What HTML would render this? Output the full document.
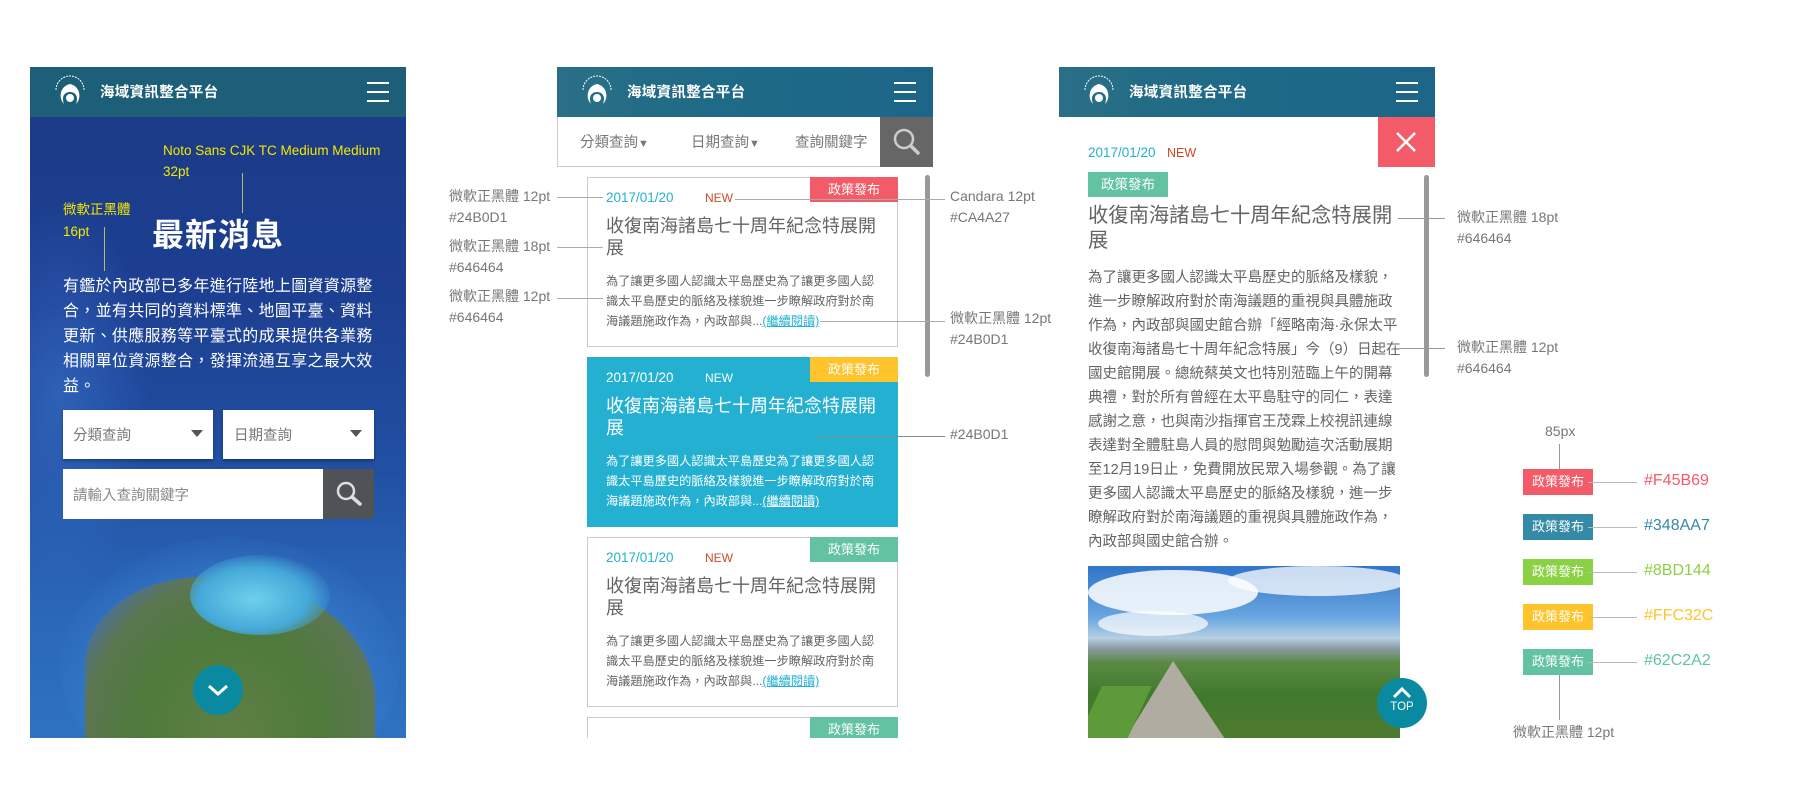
<!DOCTYPE html>
<html><head><meta charset="utf-8">
<style>
*{margin:0;padding:0;box-sizing:border-box}
html,body{width:1800px;height:800px;overflow:hidden}
body{background:#fff;position:relative;font-family:"Liberation Sans","Noto Sans CJK TC",sans-serif;}
.a{position:absolute;white-space:nowrap}
.phone{position:absolute;top:67px;width:376px;height:671px;overflow:hidden;background:#fff}
.hdr{position:absolute;left:0;top:0;width:376px;height:50px;background:linear-gradient(90deg,#2a6f86 0%,#1f6a86 40%,#1d6688 100%)}
.hdr .t{position:absolute;left:70px;top:14px;font-size:14.5px;font-weight:bold;color:#fff;letter-spacing:0.3px}
.hdr .ham{position:absolute;left:337px;top:13px;width:22px;height:22px}
.hdr .ham i{position:absolute;left:0;width:22px;height:2px;background:#fff}
.logo{position:absolute;left:20px;top:7px}
.lbl{position:absolute;font-size:14px;color:#777;line-height:21px;white-space:nowrap}
.ln{position:absolute;background:#aaa;height:1px;z-index:5}
.vl{position:absolute;background:#999;width:1px}
.card{position:absolute;left:30px;width:311px;height:170px;border:1px solid #ccc;background:#fff}
.card .tag{position:absolute;right:-1px;top:-1px;width:88px;height:25px;color:#fff;font-size:13px;text-align:center;line-height:25px}
.card .d{position:absolute;left:18px;top:12px;font-size:13.5px;color:#24B0D1}
.card .n{position:absolute;left:117px;top:13px;font-size:12px;color:#CA4A27}
.card .ti{position:absolute;left:18px;top:37px;font-size:18px;line-height:22px;color:#646464;white-space:nowrap}
.card .b{position:absolute;left:18px;top:93px;font-size:12.2px;line-height:20px;color:#646464;white-space:nowrap}
.card .b u{color:#24B0D1}
.sw{position:absolute;left:1523px;width:70px;height:26px;color:#fff;font-size:13px;text-align:center;line-height:26px}
.hx{position:absolute;left:1644px;font-size:16px;font-family:"Liberation Sans Narrow","Liberation Sans",sans-serif}
</style></head><body>

<!-- PHONE 1 -->
<div class="phone" style="left:30px;background:#1c3f8f">
  <div style="position:absolute;inset:0;background:
   radial-gradient(ellipse 90px 200px at 30px 330px,rgba(60,120,210,.5) 0%,rgba(30,80,170,0) 100%),
   linear-gradient(180deg,#1b3a86 0%,#1d3f92 35%,#2150a2 60%,#2a66b8 80%,#2f72c2 100%)"></div>
  <div style="position:absolute;left:30px;top:470px;width:340px;height:260px;border-radius:50%;background:radial-gradient(ellipse at 50% 55%,rgba(90,160,220,.7) 0%,rgba(60,130,210,.4) 55%,rgba(40,100,190,0) 75%)"></div>
  <div style="position:absolute;left:55px;top:510px;width:290px;height:220px;border-radius:40% 55% 0 0;background:radial-gradient(ellipse at 50% 70%,#5f7f45 0%,#4e7a3c 45%,#5b7650 70%,rgba(90,110,150,.6) 85%,rgba(60,100,170,0) 100%)"></div>
  <div style="position:absolute;left:160px;top:488px;width:140px;height:80px;border-radius:50%;background:radial-gradient(ellipse at 45% 55%,#6fd0ec 0%,#45a9d8 50%,rgba(40,120,200,0) 75%)"></div>
  <div class="hdr" style="background:#1d5f78"></div>
  <svg class="logo" width="40" height="36" viewBox="0 0 40 36"><path d="M6 16 A14 14 0 0 1 34 16" stroke="#fff" stroke-width="1" fill="none" stroke-dasharray="2 1"/><path d="M20 10 C10 12 8 24 14 30 C11 22 15 18 20 18 C25 18 29 22 26 30 C32 24 30 12 20 10Z" fill="#fff"/><circle cx="20" cy="24" r="4" fill="#fff"/></svg>
  <div class="hdr" style="background:none"><div class="t">海域資訊整合平台</div><div class="ham"><i style="top:2px"></i><i style="top:11px"></i><i style="top:20px"></i></div></div>
  <div class="a" style="left:133px;top:73px;font-size:13.5px;color:#f4e800;line-height:21px">Noto Sans CJK TC Medium Medium<br>32pt</div>
  <div style="position:absolute;left:212px;top:106px;width:1px;height:40px;background:#b8b870"></div>
  <div class="a" style="left:33px;top:132px;font-size:13.5px;color:#f4e800;line-height:22px">微軟正黑體<br>16pt</div>
  <div style="position:absolute;left:74px;top:160px;width:1px;height:44px;background:#b8b870"></div>
  <div class="a" style="left:122px;top:143px;font-size:32px;font-weight:bold;color:#fff;letter-spacing:1px">最新消息</div>
  <div class="a" style="left:33px;top:207px;font-size:16px;line-height:25px;color:#fff;letter-spacing:0.3px">有鑑於內政部已多年進行陸地上圖資資源整<br>合，並有共同的資料標準、地圖平臺、資料<br>更新、供應服務等平臺式的成果提供各業務<br>相關單位資源整合，發揮流通互享之最大效<br>益。</div>
  <div style="position:absolute;left:33px;top:343px;width:150px;height:49px;background:#fff;box-shadow:0 2px 3px rgba(0,0,0,.3)"><span class="a" style="left:10px;top:14px;font-size:14.5px;color:#777">分類查詢</span><span class="a" style="left:128px;top:20px;border-left:6px solid transparent;border-right:6px solid transparent;border-top:7px solid #555"></span></div>
  <div style="position:absolute;left:193px;top:343px;width:151px;height:49px;background:#fff;box-shadow:0 2px 3px rgba(0,0,0,.3)"><span class="a" style="left:11px;top:14px;font-size:14.5px;color:#777">日期查詢</span><span class="a" style="left:127px;top:20px;border-left:6px solid transparent;border-right:6px solid transparent;border-top:7px solid #555"></span></div>
  <div style="position:absolute;left:33px;top:402px;width:260px;height:50px;background:#fff"><span class="a" style="left:10px;top:15px;font-size:14.5px;color:#888">請輸入查詢關鍵字</span></div>
  <div style="position:absolute;left:293px;top:402px;width:51px;height:50px;background:#4f5257">
    <svg width="51" height="50"><circle cx="23" cy="22" r="8" stroke="#ddd" stroke-width="2.5" fill="none"/><line x1="29" y1="28" x2="37" y2="35" stroke="#ddd" stroke-width="3.5" stroke-linecap="round"/></svg></div>
  <div style="position:absolute;left:163px;top:598px;width:50px;height:50px;border-radius:50%;background:#0a8aa0">
    <svg width="50" height="50"><polyline points="16,21 25,29 34,21" stroke="#fff" stroke-width="3" fill="none"/></svg></div>
</div>

<!-- PHONE 2 labels -->
<div class="lbl" style="left:449px;top:186px">微軟正黑體 12pt<br>#24B0D1</div>
<div class="lbl" style="left:449px;top:236px">微軟正黑體 18pt<br>#646464</div>
<div class="lbl" style="left:449px;top:286px">微軟正黑體 12pt<br>#646464</div>
<div class="lbl" style="left:950px;top:186px">Candara 12pt<br>#CA4A27</div>
<div class="lbl" style="left:950px;top:308px">微軟正黑體 12pt<br>#24B0D1</div>
<div class="lbl" style="left:950px;top:424px">#24B0D1</div>

<!-- PHONE 2 -->
<div class="phone" style="left:557px">
  <div class="hdr"></div>
  <svg class="logo" width="40" height="36" viewBox="0 0 40 36"><path d="M6 16 A14 14 0 0 1 34 16" stroke="#fff" stroke-width="1" fill="none" stroke-dasharray="2 1"/><path d="M20 10 C10 12 8 24 14 30 C11 22 15 18 20 18 C25 18 29 22 26 30 C32 24 30 12 20 10Z" fill="#fff"/><circle cx="20" cy="24" r="4" fill="#fff"/></svg>
  <div class="hdr" style="background:none"><div class="t">海域資訊整合平台</div><div class="ham"><i style="top:2px"></i><i style="top:11px"></i><i style="top:20px"></i></div></div>
  <div style="position:absolute;left:0;top:50px;width:376px;height:50px;border:1px solid #ccc;border-top:0;background:#fff">
    <span class="a" style="left:22px;top:14px;font-size:14.5px;color:#777">分類查詢<span style="font-size:11px">▼</span></span>
    <span class="a" style="left:133px;top:14px;font-size:14.5px;color:#777">日期查詢<span style="font-size:11px">▼</span></span>
    <span class="a" style="left:237px;top:14px;font-size:14.5px;color:#777">查詢關鍵字</span>
  </div>
  <div style="position:absolute;left:323px;top:50px;width:53px;height:50px;background:#666">
    <svg width="53" height="50"><circle cx="24" cy="22" r="9" stroke="#ccc" stroke-width="2.5" fill="none"/><line x1="31" y1="29" x2="38" y2="36" stroke="#ccc" stroke-width="3.5" stroke-linecap="round"/></svg></div>

  <div class="card" style="top:110px"><div class="tag" style="background:#F45B69">政策發布</div><div class="d">2017/01/20</div><div class="n">NEW</div><div class="ti">收復南海諸島七十周年紀念特展開<br>展</div><div class="b">為了讓更多國人認識太平島歷史為了讓更多國人認<br>識太平島歷史的脈絡及樣貌進一步瞭解政府對於南<br>海議題施政作為，內政部與...<u>(繼續閱讀)</u></div></div>
  <div class="card" style="top:290px;background:#24B0D1;border-color:#24B0D1"><div class="tag" style="background:#FFC32C">政策發布</div><div class="d" style="color:#fff">2017/01/20</div><div class="n" style="color:#fff">NEW</div><div class="ti" style="color:#fff">收復南海諸島七十周年紀念特展開<br>展</div><div class="b" style="color:#fff">為了讓更多國人認識太平島歷史為了讓更多國人認<br>識太平島歷史的脈絡及樣貌進一步瞭解政府對於南<br>海議題施政作為，內政部與...<u style="color:#fff">(繼續閱讀)</u></div></div>
  <div class="card" style="top:470px"><div class="tag" style="background:#62C2A2">政策發布</div><div class="d">2017/01/20</div><div class="n">NEW</div><div class="ti">收復南海諸島七十周年紀念特展開<br>展</div><div class="b">為了讓更多國人認識太平島歷史為了讓更多國人認<br>識太平島歷史的脈絡及樣貌進一步瞭解政府對於南<br>海議題施政作為，內政部與...<u>(繼續閱讀)</u></div></div>
  <div class="card" style="top:650px"><div class="tag" style="background:#62C2A2">政策發布</div></div>
  <div style="position:absolute;left:368px;top:108px;width:5px;height:202px;border-radius:3px;background:#999"></div>
</div>
<div class="ln" style="left:557px;top:197px;width:46px"></div>
<div class="ln" style="left:557px;top:247px;width:46px"></div>
<div class="ln" style="left:557px;top:298px;width:46px"></div>
<div class="ln" style="left:735px;top:199px;width:210px"></div>
<div class="ln" style="left:820px;top:321px;width:125px"></div>
<div class="ln" style="left:817px;top:436px;width:128px;background:#888"></div>

<!-- PHONE 3 -->
<div class="phone" style="left:1059px">
  <div class="hdr"></div>
  <svg class="logo" width="40" height="36" viewBox="0 0 40 36"><path d="M6 16 A14 14 0 0 1 34 16" stroke="#fff" stroke-width="1" fill="none" stroke-dasharray="2 1"/><path d="M20 10 C10 12 8 24 14 30 C11 22 15 18 20 18 C25 18 29 22 26 30 C32 24 30 12 20 10Z" fill="#fff"/><circle cx="20" cy="24" r="4" fill="#fff"/></svg>
  <div class="hdr" style="background:none"><div class="t">海域資訊整合平台</div><div class="ham"><i style="top:2px"></i><i style="top:11px"></i><i style="top:20px"></i></div></div>
  <div style="position:absolute;left:319px;top:50px;width:57px;height:50px;background:#F45B69"><svg width="57" height="50"><path d="M19 16 L37 34 M37 16 L19 34" stroke="#fff" stroke-width="2.5"/></svg></div>
  <div class="a" style="left:29px;top:78px;font-size:13.5px;color:#24B0D1">2017/01/20</div>
  <div class="a" style="left:108px;top:79px;font-size:12.5px;color:#CA4A27">NEW</div>
  <div class="a" style="left:29px;top:105px;width:80px;height:25px;background:#62C2A2;color:#fff;font-size:13.5px;text-align:center;line-height:25px">政策發布</div>
  <div class="a" style="left:29px;top:137px;font-size:20.3px;line-height:25px;color:#646464">收復南海諸島七十周年紀念特展開<br>展</div>
  <div class="a" style="left:29px;top:199px;font-size:14.5px;line-height:24px;color:#646464">為了讓更多國人認識太平島歷史的脈絡及樣貌，<br>進一步瞭解政府對於南海議題的重視與具體施政<br>作為，內政部與國史館合辦「經略南海·永保太平<br>收復南海諸島七十周年紀念特展」今（9）日起在<br>國史館開展。總統蔡英文也特別蒞臨上午的開幕<br>典禮，對於所有曾經在太平島駐守的同仁，表達<br>感謝之意，也與南沙指揮官王茂霖上校視訊連線<br>表達對全體駐島人員的慰問與勉勵這次活動展期<br>至12月19日止，免費開放民眾入場參觀。為了讓<br>更多國人認識太平島歷史的脈絡及樣貌，進一步<br>瞭解政府對於南海議題的重視與具體施政作為，<br>內政部與國史館合辦。</div>
  <div style="position:absolute;left:29px;top:499px;width:312px;height:172px;overflow:hidden;background:
    linear-gradient(180deg,#2f74c8 0%,#6aa6e0 30%,#b6cfe2 42%,#8a9aa5 48%,#5b8a45 56%,#3f7a2c 75%,#4f7a30 100%)">
    <div style="position:absolute;left:0;top:4px;width:170px;height:45px;border-radius:50%;background:rgba(255,255,255,.85)"></div>
    <div style="position:absolute;left:140px;top:0;width:180px;height:30px;border-radius:50%;background:rgba(255,255,255,.75)"></div>
    <div style="position:absolute;left:10px;top:45px;width:110px;height:25px;border-radius:50%;background:rgba(255,255,255,.7)"></div>
    <div style="position:absolute;left:30px;top:95px;width:0;height:0;border-left:55px solid transparent;border-right:60px solid transparent;border-bottom:90px solid #b0aca2"></div>
    <div style="position:absolute;left:0;top:120px;width:50px;height:60px;background:#5d9a3a;transform:skewX(-25deg)"></div>
  </div>
  <div style="position:absolute;left:318px;top:611px;width:50px;height:50px;border-radius:50%;background:#0a8aa0;color:#fff;font-size:11.5px;text-align:center">
    <svg width="50" height="22" style="display:block"><polyline points="17,19 25,11 33,19" stroke="#fff" stroke-width="3" fill="none"/></svg><div style="line-height:14px">TOP</div></div>
  <div style="position:absolute;left:365px;top:108px;width:5px;height:202px;border-radius:3px;background:#999"></div>
</div>
<div class="ln" style="left:1398px;top:218px;width:47px;background:#999"></div>
<div class="ln" style="left:1398px;top:348px;width:47px;background:#999"></div>
<div class="lbl" style="left:1457px;top:207px">微軟正黑體 18pt<br>#646464</div>
<div class="lbl" style="left:1457px;top:337px">微軟正黑體 12pt<br>#646464</div>

<!-- legend -->
<div class="a" style="left:1545px;top:423px;font-size:14px;color:#777">85px</div>
<div class="vl" style="left:1559px;top:444px;height:25px"></div>
<div class="sw" style="top:469px;background:#F45B69">政策發布</div>
<div class="sw" style="top:514px;background:#348AA7">政策發布</div>
<div class="sw" style="top:559px;background:#8BD144">政策發布</div>
<div class="sw" style="top:604px;background:#FFC32C">政策發布</div>
<div class="sw" style="top:649px;background:#62C2A2">政策發布</div>
<div class="ln" style="left:1588px;top:482px;width:49px;background:#bbb"></div>
<div class="ln" style="left:1588px;top:527px;width:49px;background:#bbb"></div>
<div class="ln" style="left:1588px;top:572px;width:49px;background:#bbb"></div>
<div class="ln" style="left:1588px;top:617px;width:49px;background:#bbb"></div>
<div class="ln" style="left:1588px;top:662px;width:49px;background:#bbb"></div>
<div class="hx" style="top:472px;color:#F45B69">#F45B69</div>
<div class="hx" style="top:517px;color:#348AA7">#348AA7</div>
<div class="hx" style="top:562px;color:#8BD144">#8BD144</div>
<div class="hx" style="top:607px;color:#FFC32C">#FFC32C</div>
<div class="hx" style="top:652px;color:#62C2A2">#62C2A2</div>
<div class="vl" style="left:1559px;top:675px;height:45px"></div>
<div class="a" style="left:1513px;top:722px;font-size:14px;color:#777">微軟正黑體 12pt</div>
</body></html>
